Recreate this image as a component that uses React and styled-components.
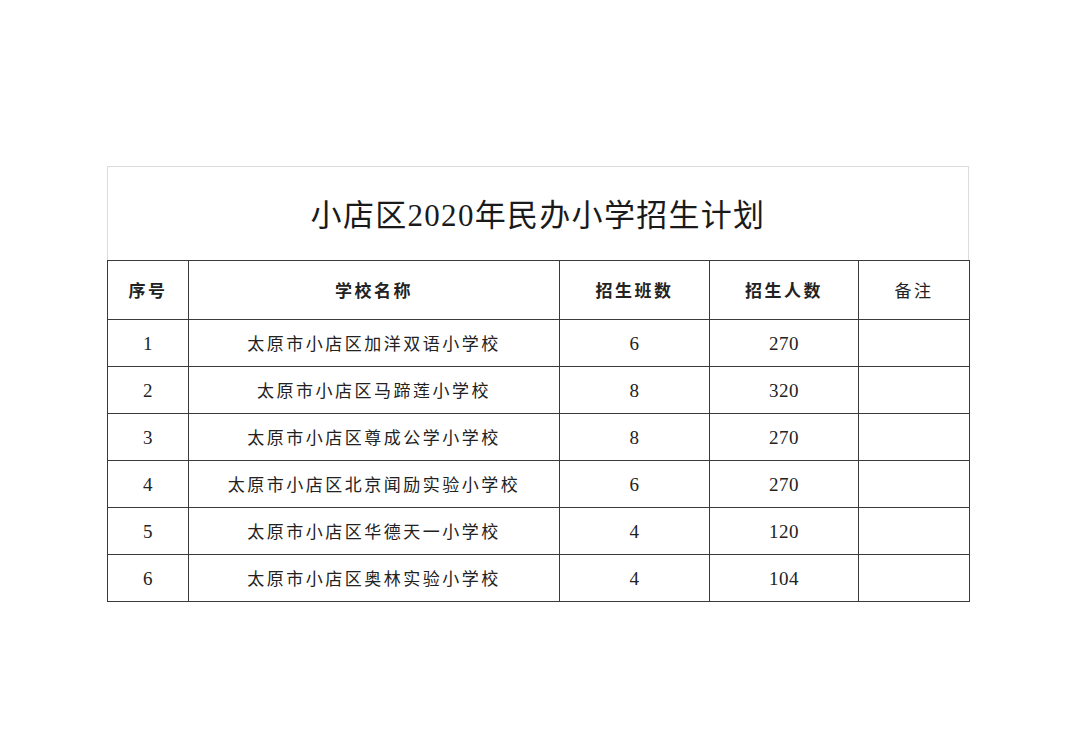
import React from "react";
import styled, { createGlobalStyle } from "styled-components";

const GlobalStyle = createGlobalStyle`
  html, body {
    margin: 0;
    padding: 0;
    background: #ffffff;
  }
  body {
    font-family: "Liberation Serif", "Noto Sans CJK SC", serif;
    color: #222;
  }
`;

const Page = styled.div`
  width: 1080px;
  height: 756px;
  padding: 166px 0 0 107px;
  box-sizing: border-box;
  background: #fff;
`;

const Sheet = styled.div`
  width: 862px;
`;

const TitleBox = styled.div`
  height: 94px;
  box-sizing: border-box;
  border: 1px solid #dcdcdc;
  border-bottom: none;
  display: flex;
  align-items: center;
  justify-content: center;
  padding-bottom: 2px;
`;

const Title = styled.h1`
  margin: 0;
  font-family: "Liberation Serif", "Noto Sans CJK SC", serif;
  font-size: 31px;
  font-weight: 400;
  color: #1a1a1a;
  letter-spacing: 1.3px;
`;

const Table = styled.table`
  width: 862px;
  border-collapse: collapse;
  table-layout: fixed;
`;

const Row = styled.tr`
  height: ${(p) => (p.$head ? 59 : 47)}px;
`;

const Cell = styled.td`
  border: 1px solid #3a3a3a;
  text-align: center;
  vertical-align: middle;
  padding: ${(p) => (p.$num ? "3px 0 0" : "4px 0 0")};
  line-height: 1.2;
  font-size: ${(p) => (p.$num ? 19 : 17)}px;
  font-weight: ${(p) => (p.$bold ? 700 : 400)};
  letter-spacing: ${(p) => (p.$head ? 2.5 : p.$num ? 0.5 : 2.5)}px;
  color: #222;
`;

const cols = [81, 371, 150, 149, 111];

const rows = [
  ["1", "太原市小店区加洋双语小学校", "6", "270"],
  ["2", "太原市小店区马蹄莲小学校", "8", "320"],
  ["3", "太原市小店区尊成公学小学校", "8", "270"],
  ["4", "太原市小店区北京闻励实验小学校", "6", "270"],
  ["5", "太原市小店区华德天一小学校", "4", "120"],
  ["6", "太原市小店区奥林实验小学校", "4", "104"],
];

export default function App() {
  return (
    <>
      <GlobalStyle />
      <Page>
        <Sheet>
          <TitleBox>
            <Title>小店区2020年民办小学招生计划</Title>
          </TitleBox>
          <Table>
            <colgroup>
              {cols.map((w, i) => (
                <col key={i} style={{ width: w }} />
              ))}
            </colgroup>
            <tbody>
              <Row $head>
                <Cell $head $bold>序号</Cell>
                <Cell $head $bold>学校名称</Cell>
                <Cell $head $bold>招生班数</Cell>
                <Cell $head $bold>招生人数</Cell>
                <Cell $head>备注</Cell>
              </Row>
              {rows.map((r) => (
                <Row key={r[0]}>
                  {r.map((c, i) => (
                    <Cell key={i} $num={i !== 1}>{c}</Cell>
                  ))}
                  <Cell />
                </Row>
              ))}
            </tbody>
          </Table>
        </Sheet>
      </Page>
    </>
  );
}
